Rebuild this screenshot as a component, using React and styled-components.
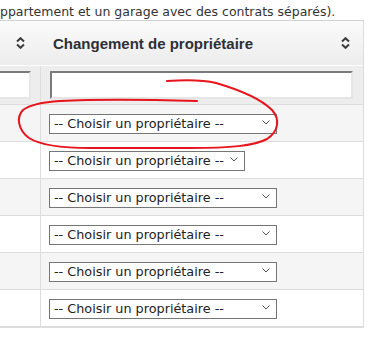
import React from 'react';
import styled, {createGlobalStyle} from 'styled-components';

const GlobalStyle = createGlobalStyle`
  html, body {
    margin: 0;
    padding: 0;
    background: #fff;
  }
  body {
    width: 382px;
    height: 350px;
    overflow: hidden;
    font-family: "DejaVu Sans", Verdana, sans-serif;
  }
`;

const Page = styled.div`
  position: relative;
  width: 382px;
  height: 350px;
  overflow: hidden;
`;

const Intro = styled.p`
  box-sizing: border-box;
  margin: 0;
  height: 20px;
  padding-top: 3px;
  line-height: 17px;
  font-size: 12.5px;
  color: #333;
  white-space: nowrap;
`;

// the page is scrolled a little to the right, so the first column is cut
const Table = styled.div`
  box-sizing: border-box;
  width: 424px;
  margin-left: -60px;
  border-top: 1px solid #d0d0d0;
  border-right: 1px solid #ddd;
  border-bottom: 1px solid #ddd;
`;

const Row = styled.div`
  display: flex;
  border-bottom: 1px solid ${p => p.$line || '#ddd'};
  background: ${p => p.$bg || '#fff'};
`;

const HeadRow = styled(Row)`
  height: 44px;
  background: linear-gradient(#fbfbfb, #ececec);
`;

const Cell = styled.div`
  box-sizing: border-box;
  display: flex;
  align-items: center;
  width: ${p => p.$first ? '101px' : '322px'};
  border-right: ${p => p.$first ? `1px solid ${p.$divider || '#ddd'}` : 'none'};
  padding: ${p => p.$pad || '8px'};
  justify-content: ${p => p.$justify || 'flex-start'};
`;

const HeadTitle = styled.span`
  font-family: "Liberation Sans", Arial, sans-serif;
  font-weight: bold;
  font-size: 15px;
  color: #2f2f37;
`;

const FilterInput = styled.input`
  box-sizing: border-box;
  width: 100%;
  height: 28px;
  margin: 0;
  padding: 0 4px;
  background: #fff;
  border-style: solid;
  border-width: 2px;
  border-color: #7a7a7a #e6e6e6 #e6e6e6 #7a7a7a;
  outline: none;
`;

const SelectBox = styled.div`
  position: relative;
  box-sizing: border-box;
  width: ${p => p.$w}px;
  height: 20px;
`;

const Select = styled.select`
  appearance: none;
  box-sizing: border-box;
  width: 100%;
  height: 20px;
  margin: 0;
  padding: 0 0 0 4px;
  border: 1px solid #767676;
  border-radius: 0;
  background: #fff;
  font-family: "DejaVu Sans", Verdana, sans-serif;
  font-size: 12.8px;
  color: #222;
  line-height: 18px;
`;

const Chevron = styled.svg`
  position: absolute;
  right: 7px;
  top: 7px;
  pointer-events: none;
`;

const Scribble = styled.svg`
  position: absolute;
  left: 0;
  top: 0;
  pointer-events: none;
`;

const SortIcon = () => (
    <svg width="9" height="12" viewBox="0 0 9 12">
        <path d="M1 4.5 L4.5 1.2 L8 4.5" fill="none" stroke="#3c3c3c" strokeWidth="2"/>
        <path d="M1 7.5 L4.5 10.8 L8 7.5" fill="none" stroke="#3c3c3c" strokeWidth="2"/>
    </svg>
);

const OwnerSelect = ({width}) => (
    <SelectBox $w={width}>
        <Select defaultValue="">
            <option value="">-- Choisir un propriétaire --</option>
        </Select>
        <Chevron width="8" height="5" viewBox="0 0 8 5">
            <path d="M0.5 0.5 L4 4 L7.5 0.5" fill="none" stroke="#555" strokeWidth="1"/>
        </Chevron>
    </SelectBox>
);

const rows = [228, 196, 228, 228, 228, 228];

export default function App() {
    return (
        <Page>
            <GlobalStyle/>
            <Intro>ppartement et un garage avec des contrats séparés).</Intro>
            <Table>
                <HeadRow $line="#fff">
                    <Cell $first $divider="transparent" $justify="flex-end" $pad="0 15px 0 0">
                        <SortIcon/>
                    </Cell>
                    <Cell $justify="space-between" $pad="0 13px 0 12px">
                        <HeadTitle>Changement de propriétaire</HeadTitle>
                        <SortIcon/>
                    </Cell>
                </HeadRow>
                <Row $bg="#ededed">
                    <Cell $first $pad="5px 9px 5px 9px">
                        <FilterInput/>
                    </Cell>
                    <Cell $pad="5px 10px 5px 9px">
                        <FilterInput/>
                    </Cell>
                </Row>
                {rows.map((w, i) => (
                    <Row key={i} $bg={i % 2 === 0 ? '#f5f5f5' : '#fff'}>
                        <Cell $first/>
                        <Cell $pad="8px">
                            <OwnerSelect width={w}/>
                        </Cell>
                    </Row>
                ))}
            </Table>
            <Scribble width="382" height="350" viewBox="0 0 382 350">
                <path
                    d="M167 81 C182 80 200 79 216 83 C240 90 262 100 272 110 C280 119 279 131 267 139 C254 146 230 148 190 148 L90 148 C60 148 40 145 29 138 C18 130 16 117 23 110 C31 104 44 102 60 101 C100 99 160 100 197 101"
                    fill="none" stroke="#e8141c" strokeWidth="2" strokeLinecap="round"/>
            </Scribble>
        </Page>
    );
}
